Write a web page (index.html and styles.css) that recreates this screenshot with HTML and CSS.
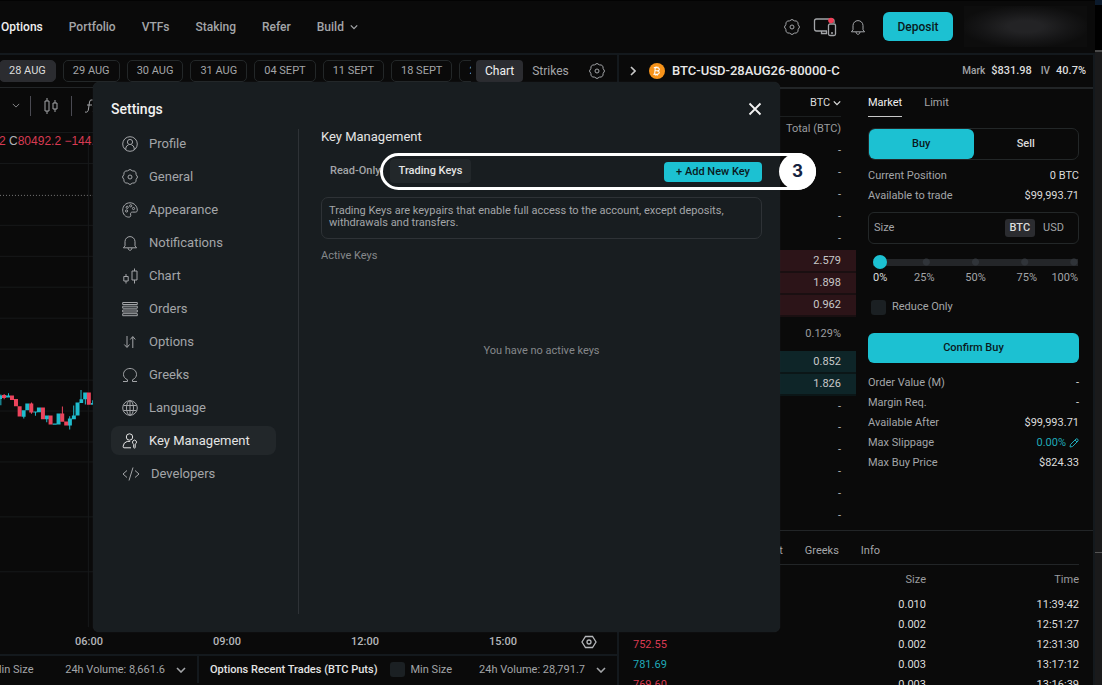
FILE: index.html
```html
<!DOCTYPE html>
<html lang="en">
<head>
<meta charset="utf-8">
<title>Settings – Key Management</title>
<link rel="stylesheet" href="styles.css">
</head>
<body>
<svg class="defs" aria-hidden="true">
  <symbol id="gear" viewBox="0 0 16 16"><path d="M14.1 5.47Q17 8 14.1 10.53Q14.36 14.36 10.53 14.1Q8 17 5.47 14.1Q1.64 14.36 1.9 10.53Q-1 8 1.9 5.47Q1.64 1.64 5.47 1.9Q8-1 10.53 1.9Q14.36 1.64 14.1 5.47Z"/><circle cx="8" cy="8" r="2"/></symbol>
  <symbol id="bell" viewBox="0 0 16 16"><path d="M3 10.8V6.6a5 5 0 0 1 10 0v4.2l1.6 2H1.4zM6 13c.2 1.5 1 2.3 2 2.3s1.800-.8 2-2.300"/></symbol>
  <symbol id="chev" viewBox="0 0 10 6"><path d="M1 1l4 4 4-4"/></symbol>
</svg>
<div class="screen">
  <div class="app">
    <header class="header">
      <nav class="nav">
        <a class="on" href="#">Options</a><a href="#">Portfolio</a><a href="#">VTFs</a><a href="#">Staking</a><a href="#">Refer</a>
        <a href="#">Build <svg class="chev"><use href="#chev"/></svg></a>
      </nav>
      <div class="tools">
        <button class="icon-btn" aria-label="Settings"><svg class="ic"><use href="#gear"/></svg></button>
        <button class="icon-btn" aria-label="Devices"><svg class="devices" viewBox="0 0 24 20"><path d="M14 14H3.500Q1.500 14 1.500 12V4Q1.500 2 3.500 2H19Q21 2 21 4V6M8.500 14v2.500h5V14"/><rect x="15.500" y="7" width="7" height="11.500" rx="1.500"/><path d="M18 16h2"/><circle class="dot" cx="18" cy="3.500" r="2.800"/></svg></button>
        <button class="icon-btn" aria-label="Notifications"><svg class="ic"><use href="#bell"/></svg></button>
        <button class="deposit">Deposit</button>
        <div class="account"></div>
      </div>
    </header>
    <div class="body">
      <main class="left">
        <div class="expiries">
          <div class="dates">
            <button class="on first">28 AUG</button><button>29 AUG</button><button>30 AUG</button><button>31 AUG</button><button>04 SEPT</button><button>11 SEPT</button><button>18 SEPT</button><button>25 SEPT</button>
          </div>
          <div class="views">
            <button class="on">Chart</button><button>Strikes</button>
            <button class="icon-btn" aria-label="Chart settings"><svg class="ic"><use href="#gear"/></svg></button>
          </div>
        </div>
        <div class="toolbar">
          <svg class="chev thin"><use href="#chev"/></svg>
          <i class="sep"></i>
          <svg class="ic" viewBox="0 0 16 18"><path d="M4 1v3M4 14v3M2 4h4v10H2zM12 3v3M12 12v3M10 6h4v6h-4z"/></svg>
          <i class="sep"></i>
          <svg class="ic" viewBox="0 0 16 16"><path d="M1 14q3 1 3.500-3l1-7q.5-3 3-2M3 7h5M9 8l5 6M14 8l-5 6"/></svg>
        </div>
        <div class="plot">
          <svg class="grid" preserveAspectRatio="xMinYMin slice" viewBox="0 0 618 508">
            <path class="lines" d="M0 9.500H618M0 40.500H618M0 102.500H618M0 133.500H618M0 164.500H618M0 195.500H618M0 226.500H618M0 257.500H618M0 288.500H618M0 319.500H618M0 339.500H618M0 394.500H618M0 449.500H618M88.500 9V505"/>
            <path class="last" d="M0 72.500H618"/>
            <g transform="translate(0 247) scale(.3333)">
              <path class="up" d="M0 78h6v10H0zM1 75h3v32H1zM18 78h12v6H18zM24 71h3v10h-3zM65 122h12v20H65zM70 122h3v25h-3zM76 102h12v20H76zM100 126h12v3h-12zM105 126h3v13h-3zM111 114h12v14h-12zM135 138h12v11h-12zM139 138h3v20h-3zM158 162h12v4h-12zM170 132h12v33h-12zM204 147h12v21h-12zM208 140h3v40h-3zM216 138h12v11h-12zM220 108h3v30h-3zM227 99h12v39h-12zM239 89h11v11h-11zM242 61h3v30h-3zM250 69h12v20h-12zM255 69h3v36h-3zM273 100h12v6h-12zM277 92h3v10h-3z"/>
              <path class="down" d="M6 76h12v9H6zM11 73h3v16h-3zM30 78h12v13H30zM42 88h12v22H42zM53 110h12v31H53zM88 102h12v27H88zM93 99h3v34h-3zM123 114h12v35h-12zM146 138h12v27h-12zM181 132h12v25h-12zM186 111h3v22h-3zM193 156h12v12h-12zM261 69h12v37h-12z"/>
            </g>
          </svg>
          <p class="ohlc"><b>2</b> C<b>80492.2</b> <b>−144.6</b></p>
        </div>
        <div class="axis">
          <span>06:00</span><span>09:00</span><span>12:00</span><span>15:00</span>
          <svg class="ic hex" viewBox="0 0 16 16"><path d="M4.500 2.500h7L15 8l-3.500 5.500h-7L1 8z"/><circle cx="8" cy="8" r="2"/></svg>
        </div>
        <div class="dock">
          <div class="pane calls">
            <span>Min Size</span>
            <button class="vol">24h Volume: 8,661.6 <svg class="chev"><use href="#chev"/></svg></button>
          </div>
          <div class="pane puts">
            <strong>Options Recent Trades (BTC Puts)</strong>
            <label class="check"><input type="checkbox">Min Size</label>
            <button class="vol">24h Volume: 28,791.7 <svg class="chev"><use href="#chev"/></svg></button>
          </div>
        </div>
      </main>
      <aside class="right">
        <div class="instrument">
          <svg class="next" viewBox="0 0 6 10"><path d="M1 1l4 4-4 4"/></svg>
          <svg class="coin" viewBox="0 0 16 16"><circle cx="8" cy="8" r="8"/><path d="M6.300 4.500l-.7 7M4.800 4.600l3.600.2c2.800.2 2.400 3.100-.2 3l-2-.1M8.200 7.900c3 .3 2.600 3.600-.4 3.500l-3.500-.2M7.200 3.400l-.1 1.200M9 3.600l-.1 1.200M6.500 11.300l-.1 1.200M8.200 11.500l-.1 1.200"/></svg>
          <h1>BTC-USD-28AUG26-80000-C</h1>
          <dl class="stats"><dt>Mark</dt><dd>$831.98</dd><dt>IV</dt><dd>40.7%</dd></dl>
        </div>
        <div class="trade">
          <section class="book">
            <div class="unit"><select aria-label="Book unit"><option>BTC</option></select><svg class="chev"><use href="#chev"/></svg></div>
            <table>
              <thead><tr><th>Total (BTC)</th></tr></thead>
              <tbody>
                <tr><td>-</td></tr><tr><td>-</td></tr><tr><td>-</td></tr><tr><td>-</td></tr><tr><td>-</td></tr>
                <tr class="ask"><td>2.579</td></tr><tr class="ask"><td>1.898</td></tr><tr class="ask"><td>0.962</td></tr>
                <tr class="spread"><td>0.129%</td></tr>
                <tr class="bid"><td>0.852</td></tr><tr class="bid"><td>1.826</td></tr>
                <tr><td>-</td></tr><tr><td>-</td></tr><tr><td>-</td></tr><tr><td>-</td></tr><tr><td>-</td></tr><tr><td>-</td></tr>
              </tbody>
            </table>
          </section>
          <form class="ticket">
            <div class="types"><button type="button" class="on">Market</button><button type="button">Limit</button></div>
            <div class="sides"><button type="button" class="on">Buy</button><button type="button">Sell</button></div>
            <dl class="rows"><div><dt>Current Position</dt><dd>0 BTC</dd></div><div><dt>Available to trade</dt><dd>$99,993.71</dd></div></dl>
            <div class="size"><input type="text" aria-label="Size" placeholder="Size"><button type="button" class="on">BTC</button><button type="button">USD</button></div>
            <div class="slider">
              <input type="range" aria-label="Size percentage" min="0" max="100" value="0">
              <div class="marks"><span class="on">0%</span><span>25%</span><span>50%</span><span>75%</span><span>100%</span></div>
            </div>
            <label class="check reduce"><input type="checkbox">Reduce Only</label>
            <button type="button" class="confirm">Confirm Buy</button>
            <dl class="rows totals">
              <div><dt>Order Value (M)</dt><dd>-</dd></div>
              <div><dt>Margin Req.</dt><dd>-</dd></div>
              <div><dt>Available After</dt><dd>$99,993.71</dd></div>
              <div><dt>Max Slippage</dt><dd class="link">0.00% <svg viewBox="0 0 10 10"><path d="M1 9l.5-2.500L7 1q1-.6 1.700.2T9 3L3.500 8.500zM6 2l2 2"/></svg></dd></div>
              <div><dt>Max Buy Price</dt><dd>$824.33</dd></div>
            </dl>
          </form>
        </div>
        <section class="trades">
          <div class="tabs"><button>Chart</button><button>Greeks</button><button>Info</button></div>
          <table>
            <thead><tr><th>Price</th><th>Size</th><th>Time</th></tr></thead>
            <tbody>
              <tr><td class="buy">781.69</td><td>0.010</td><td>11:39:42</td></tr>
              <tr><td class="buy">781.69</td><td>0.002</td><td>12:51:27</td></tr>
              <tr><td class="sell">752.55</td><td>0.002</td><td>12:31:30</td></tr>
              <tr><td class="buy">781.69</td><td>0.003</td><td>13:17:12</td></tr>
              <tr><td class="sell">769.60</td><td>0.003</td><td>13:16:39</td></tr>
            </tbody>
          </table>
        </section>
      </aside>
    </div>
  </div>
  <div class="edge"><i class="e1"></i><i class="e2"></i><i class="e3"></i><i class="e4"></i></div>

  <section class="modal" role="dialog" aria-labelledby="modal-title">
    <header class="modal-head">
      <h2 id="modal-title">Settings</h2>
      <button class="icon-btn" aria-label="Close"><svg class="close" viewBox="0 0 14 14"><path d="M1.500 1.500l11 11M12.500 1.500l-11 11"/></svg></button>
    </header>
    <div class="modal-body">
      <nav class="menu">
        <button><svg class="ic" viewBox="0 0 16 16"><circle cx="8" cy="8" r="7.300"/><circle cx="8" cy="6" r="2.600"/><path d="M3.800 13.800V12q.4-2.500 2.800-3.200M12.200 13.800V12q-.4-2.500-2.800-3.200"/></svg>Profile</button>
        <button><svg class="ic"><use href="#gear"/></svg>General</button>
        <button><svg class="ic" viewBox="0 0 16 16"><path d="M15.300 8.300c0-4-3-7.500-7.300-7.500S.7 4 .7 8.100c0 3.900 2.600 7 6 7 1.800 0 2.300-1 2-2-.6-2 .2-3 1.800-3h3c1.100 0 1.800-.6 1.800-1.800z"/><circle cx="4.600" cy="9" r="1.100"/><circle cx="5.200" cy="5.300" r="1.100"/><circle cx="8.700" cy="3.800" r="1.100"/><circle cx="11.500" cy="6.500" r="1.100"/></svg>Appearance</button>
        <button><svg class="ic"><use href="#bell"/></svg>Notifications</button>
        <button><svg class="ic" viewBox="0 0 16 16"><path d="M4 6v2.500M4 13v2.500M1.800 8.500h4.400V13H1.800zM12.500.5V3M12.500 12v3.500M10 3h5v9h-5z"/></svg>Chart</button>
        <button><svg class="ic" viewBox="0 0 16 16"><path d="M.7 1.500h14.600v2H.7zM.7 5.200h14.600v2H.7zM.7 9h14.600v2H.7zM.7 12.700h14.600v2H.7z"/></svg>Orders</button>
        <button><svg class="ic" viewBox="0 0 16 16"><path d="M5 2v11M2.300 10.500l2.700 3 2.500-3M10.800 14V3M8.300 5.500l2.500-3 2.500 3"/></svg>Options</button>
        <button><svg class="ic" viewBox="0 0 16 16"><path d="M1 14.500h4.500v-1.700C3 11.600 1.500 9.800 1.500 7.500 1.500 4 4.200 1.500 8 1.500S14.500 4 14.500 7.500c0 2.300-1.500 4.100-4 5.300v1.700H15"/></svg>Greeks</button>
        <button><svg class="ic" viewBox="0 0 16 16"><circle cx="8" cy="8" r="7.300"/><ellipse cx="8" cy="8" rx="3.500" ry="7.300"/><path d="M1.500 5.500h13M1.500 10.500h13M8 .7v14.600"/></svg>Language</button>
        <button class="on"><svg class="ic" viewBox="0 0 16 16"><circle cx="7.500" cy="4" r="3.200"/><path d="M9 14.800H2q-.8 0-.8-1V13q.3-3.500 4-4.600h3M11 10.500a2 2 0 1 1 3 0v0l-.8.8v3l-.7 1-.8-1v-3z"/></svg>Key Management</button>
        <button><svg class="ic wide" viewBox="0 0 18 16"><path d="M5 4.500L1 8l4 3.500M13 4.500L17 8l-4 3.500M11 1.500l-4 13"/></svg>Developers</button>
      </nav>
      <div class="content">
        <h3>Key Management</h3>
        <div class="key-bar">
          <button class="tab">Read-Only</button><button class="tab on">Trading Keys</button>
          <button class="add">+ Add New Key</button>
        </div>
        <p class="note">Trading Keys are keypairs that enable full access to the account, except deposits, withdrawals and transfers.</p>
        <h4>Active Keys</h4>
        <p class="empty">You have no active keys</p>
      </div>
    </div>
    <div class="callout"><span>3</span></div>
  </section>
</div>
</body>
</html>
```
FILE: styles.css
```css
* { box-sizing: border-box; }
body, h1, h2, h3, h4, p, dl, dd { margin: 0; font-weight: 400; }
body { background: #0a0a0a; color: #a3a5a8; font: 11px/16px Roboto, sans-serif; }
button, input, select { font: inherit; color: inherit; background: none; border: 0; padding: 0; margin: 0; }
button { white-space: nowrap; }
a { color: inherit; text-decoration: none; }
svg { fill: none; stroke: currentColor; flex: none; }
.defs { position: absolute; width: 0; height: 0; }
.ic { width: 16px; height: 16px; display: block; }
.chev { width: 10px; height: 6px; stroke-width: 1.600; }
.chev.thin { width: 8px; height: 5px; stroke-width: 1; }
.icon-btn { display: grid; place-items: center; }

.screen { position: relative; display: flex; height: 100vh; overflow: hidden; }
.app { flex: 1; min-width: 0; display: flex; flex-direction: column; }
.header { flex: none; display: flex; align-items: center; justify-content: space-between; height: 55px; padding: 0 8px 1px 1px; border-top: 1px solid #030303; border-bottom: 2px solid #14191d; }
.nav { display: flex; gap: 26px; font-size: 12px; font-weight: 500; }
.nav a { display: flex; align-items: center; gap: 6px; }
.nav .on { color: #f0f0f0; }
.nav .chev { width: 8px; }
.tools { display: flex; align-items: center; gap: 11px; }
.tools .icon-btn + .icon-btn { margin-left: 2px; }
.devices { width: 24px; height: 20px; display: block; stroke-width: 1.300; }
.dot { fill: #f23d55; stroke: none; }
.deposit { width: 70px; height: 29px; margin-left: 6px; border-radius: 6px; background: #1cc1d2; color: #0a1a1d; font-size: 12px; font-weight: 500; }
.account { width: 123px; height: 41px; background: radial-gradient(ellipse at center, #232325 20%, #161617 50%, #0d0d0d 75%); }

.body { flex: 1; min-height: 0; display: flex; }
.left { flex: 1; min-width: 0; display: flex; flex-direction: column; border-right: 2px solid #14191d; }
.expiries { display: flex; gap: 5px; height: 33px; padding: 5px 0; border-bottom: 1px solid #222527; }
.dates { flex: 1; min-width: 0; display: flex; gap: 7px; overflow: hidden; }
.dates button { flex: none; height: 22px; padding: 0 9px; border: 1px solid #232728; border-radius: 5px; }
.dates .on { background: #2b2c30; border-color: #2b2c30; color: #dcdcdc; }
.dates .first { margin-left: -1px; }
.views { display: flex; align-items: center; width: 141px; font-size: 12px; }
.views button { height: 22px; padding: 0 9px; border-radius: 4px; }
.views .on { background: #2b2c30; color: #f0f0f0; }
.views .icon-btn { margin-left: auto; padding: 0; margin-right: 12px; }
.toolbar { display: flex; align-items: center; gap: 10px; height: 35px; padding-left: 12px; overflow: hidden; }
.toolbar .ic { margin: 0 2px; height: 18px; }
.sep { width: 1px; height: 20px; background: #4a4a52; }
.plot { flex: 1; min-height: 0; position: relative; overflow: hidden; }
.grid { position: absolute; inset: 0; width: 100%; height: 100%; stroke: none; }
.lines { stroke: #17191a; }
.last { stroke: #777; stroke-dasharray: 1 2; }
.up { fill: #1fbccd; }
.down { fill: #ea445c; }
.ohlc { position: relative; padding-top: 10px; margin-left: -1px; font: 12px/17px "Liberation Sans", sans-serif; color: #b0b2b6; white-space: nowrap; }
.ohlc b { font-weight: 400; color: #d93a52; }
.axis { display: flex; align-items: center; height: 24px; padding: 0 20px; color: #b5b7ba; font-weight: 500; }
.axis span { flex: none; width: 138px; text-align: center; }
.hex { margin-left: auto; stroke-width: 1.300; }
.dock { display: flex; height: 31px; padding-bottom: 2px; border-top: 2px solid #14191d; white-space: nowrap; }
.pane { display: flex; align-items: center; justify-content: space-between; }
.calls { width: 199px; padding: 0 11px 0 0; border-right: 2px solid #14191d; }
.calls > span { margin-left: -8px; }
.puts { flex: 1; gap: 12px; padding: 0 11px; }
.puts strong { color: #e4e4e4; font-weight: 500; }
.vol { display: flex; align-items: center; gap: 11px; }
.puts .vol { margin-left: auto; }
.check { display: flex; align-items: center; gap: 6px; }
.check input { appearance: none; width: 15px; height: 15px; border-radius: 3px; background: #1b2023; }

.right { width: 476px; display: flex; flex-direction: column; border-right: 2px solid #14191d; }
.instrument { flex: none; display: flex; align-items: center; height: 34px; padding: 0 7px 1px 11px; border-bottom: 2px solid #222527; }
.next { width: 6px; height: 10px; stroke-width: 1.600; color: #c8c8c8; }
.coin { width: 16px; height: 16px; margin: 0 7px 0 13px; stroke: #fff; stroke-width: 1.100; }
.coin circle { fill: #f7931a; stroke: none; }
h1 { font-size: 13px; font-weight: 500; color: #e8e8e8; }
.stats { display: flex; gap: 6px; margin-left: auto; font-size: 10px; font-weight: 500; }
.stats dd { font-size: 11px; font-weight: 500; color: #dcdcdc; }
.stats dd + dt { margin-left: 3px; }
.trade { flex: none; display: flex; gap: 12px; height: 442px; padding: 1px 14px 0 0; border-bottom: 1px solid #222527; }
.book { flex: 1; color: #b8babc; }
.unit { display: flex; align-items: center; justify-content: flex-end; height: 27px; margin-right: 15px; color: #dcdcdc; border-bottom: 1px solid #1c1f20; }
.unit select { appearance: none; }
.unit .chev { width: 8px; margin-left: 2px; }
table { width: 100%; border-collapse: collapse; }
th { font-weight: 400; color: #9a9c9f; }
.book th, .book td { height: 22px; padding: 0 15px 0 0; text-align: right; }
.book th { height: 23px; }
.book .ask td, .book .bid td { color: #c8c8c8; border-bottom: 2px solid #1a0f11; background: #2c1418; }
.book .bid td { background: #0e2528; border-color: #0b1617; }
.book .spread td { height: 35px; color: #9a9c9f; }
.ticket { width: 211px; }
.types { display: flex; gap: 22px; }
.types button { height: 27px; border-bottom: 1px solid transparent; }
.types .on { color: #f0f0f0; border-color: #c8c8c8; }
.sides { display: flex; height: 32px; margin-top: 11px; border: 1px solid #232728; border-radius: 7px; }
.sides button { flex: 1; color: #dcdcdc; font-weight: 500; border-radius: 6px; }
.sides .on, .confirm { background: #1cc1d2; color: #0a1a1d; }
.rows { margin-top: 6px; }
.rows div { display: flex; align-items: center; justify-content: space-between; height: 20px; }
.rows dd { color: #dcdcdc; }
.rows .link { display: flex; align-items: center; gap: 3px; color: #1fa9b8; }
.link svg { width: 10px; height: 10px; }
.size { display: flex; align-items: center; height: 32px; margin-top: 6px; padding: 0 6px 0 5px; border: 1px solid #232728; border-radius: 6px; }
.size input { flex: 1; min-width: 0; }
.size input::placeholder { color: #a3a5a8; opacity: 1; }
.size button { height: 18px; padding: 0 5px; border-radius: 3px; }
.size button + button { padding: 0 8px; }
.size .on { background: #2b2c30; color: #dcdcdc; font-weight: 500; }
.slider { padding: 11px 1px 0 5px; }
.slider input { appearance: none; display: block; width: 100%; height: 14px; background: linear-gradient(#242629, #242629) center / 100% 7px no-repeat; }
.slider input::-webkit-slider-runnable-track { height: 14px; background: radial-gradient(circle at 26% 50%, #303439 3px, transparent 4px), radial-gradient(circle at 50% 50%, #303439 3px, transparent 4px), radial-gradient(circle at 74% 50%, #303439 3px, transparent 4px), radial-gradient(circle at 98% 50%, #303439 3px, transparent 4px); }
.slider input::-webkit-slider-thumb { appearance: none; width: 14px; height: 14px; border-radius: 50%; background: #1cc1d2; }
.marks { display: grid; grid-template-columns: minmax(0, 1fr) repeat(3, minmax(0, 2fr)) minmax(0, 1fr); text-align: center; margin-top: 1px; }
.marks .on { color: #dcdcdc; text-align: left; }
.marks span:last-child { justify-self: end; }
.reduce { margin: 13px 0 0 3px; }
.confirm { width: 100%; height: 30px; margin-top: 18px; border-radius: 6px; font-weight: 500; }
.totals { margin-top: 10px; }
.tabs { display: flex; gap: 22px; height: 33px; margin: 0 14px 0 137px; align-items: center; padding-top: 7px; }
.trades table { width: 446px; margin-left: 14px; border-top: 1px solid #222527; }
.trades th, .trades td { height: 20px; padding: 0; text-align: right; color: #dcdcdc; }
.trades th { height: 30px; color: #9a9c9f; }
.trades tr > :first-child { width: 140px; text-align: left; }
.trades tr > :last-child { width: 153px; }
.trades .sell { color: #d93a52; }
.trades .buy { color: #1fa9b8; }

.edge { width: 7px; display: flex; flex-direction: column; background: #1a1a1b; }
.e1 { height: 5px; background: #0b1a2c; }
.e2 { height: 45px; background: #000; }
.e3 { height: 2px; background: #4a4a4a; }
.e4 { height: 501px; border-bottom: 1px solid #555; }

.modal { position: absolute; left: 93px; top: 82px; width: 687px; height: 550px; display: flex; flex-direction: column; padding: 0 18px 18px; border-radius: 6px; background: #181d20; box-shadow: 0 0 1px #2c3134; }
.modal-head { display: flex; align-items: center; justify-content: space-between; height: 47px; padding-top: 7px; color: #f2f2f2; }
h2 { font-size: 14px; font-weight: 500; }
.close { width: 14px; height: 14px; stroke-width: 1.800; }
.modal-body { flex: 1; display: flex; }
.menu { display: flex; flex-direction: column; gap: 4px; width: 188px; padding-right: 22px; border-right: 1px solid #2e3236; }
.menu button { display: flex; align-items: center; gap: 11px; height: 29px; padding: 0 11px; border-radius: 8px; font-size: 13px; }
.menu .on { background: #22272a; color: #e4e4e4; }
.menu .wide { width: 18px; }
.content { flex: 1; padding-left: 22px; }
h3 { font-size: 13px; color: #e4e4e4; }
.key-bar { display: flex; align-items: center; height: 26px; margin-top: 13px; font-weight: 500; }
.tab { height: 24px; padding: 0 9px; border-radius: 4px; }
.tab.on { background: #22272a; color: #e4e4e4; }
.add { height: 20px; padding: 0 12px; margin: 2px 0 0 auto; border-radius: 4px; background: #1cc1d2; color: #0a1a1d; }
.note { margin-top: 13px; padding: 7px; min-height: 42px; line-height: 12px; border: 1px solid #2e3236; border-radius: 7px; }
h4 { margin-top: 9px; color: #85888b; }
.empty { margin-top: 79px; text-align: center; color: #85888b; }
.callout { position: absolute; left: 287px; top: 71px; width: 436px; height: 37px; display: flex; justify-content: flex-end; border: 3px solid #fff; border-radius: 19px; pointer-events: none; }
.callout span { width: 37px; height: 37px; margin: -3px; border-radius: 50%; background: #fff; color: #15233f; font: 700 17px/37px Inter, sans-serif; text-align: center; }
```
